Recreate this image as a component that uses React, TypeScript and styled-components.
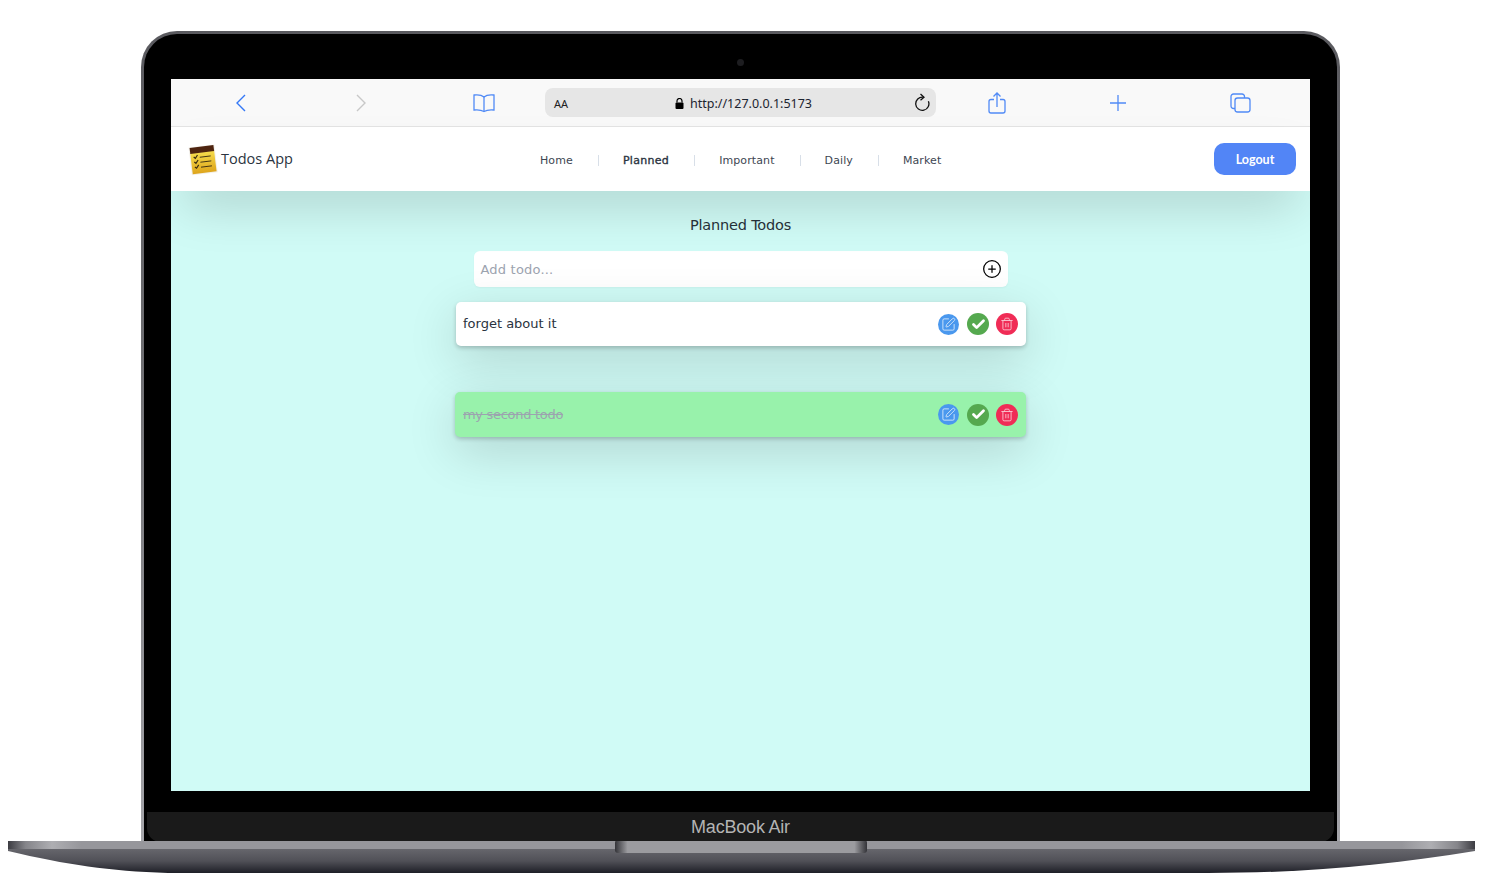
import React from 'react';
import styled, { createGlobalStyle } from 'styled-components';
import { Check, CirclePlus, SquarePen, Trash2 } from 'lucide-react';

const GlobalStyle = createGlobalStyle`
	html, body {
		margin: 0;
		background: #fff;
		overflow: hidden;
	}
`;

const Page = styled.div`
	width: 1494px;
	height: 894px;
	padding-top: 31px;
	box-sizing: border-box;
	display: flex;
	flex-direction: column;
	align-items: flex-start;
`;

const Lid = styled.div`
	width: 1199px;
	height: 810px;
	margin-left: 141px;
	padding: 3px 3px 0;
	box-sizing: border-box;
	border-radius: 36px 36px 0 0;
	background: linear-gradient(180deg, #5a5a5f 0%, #6e6e72 40%, #a5a5aa 100%);
`;

const Bezel = styled.div`
	height: 100%;
	border-radius: 33px 33px 0 0;
	background: #000;
	display: flex;
	flex-direction: column;
`;

const CameraRow = styled.div`
	height: 45px;
	flex: none;
	display: flex;
	align-items: flex-end;
	justify-content: center;
	padding-bottom: 13px;
	box-sizing: border-box;
`;

const Camera = styled.div`
	width: 7px;
	height: 7px;
	border-radius: 50%;
	background: #1d1d20;
`;

const Screen = styled.div`
	height: 712px;
	flex: none;
	margin: 0 27px;
	display: flex;
	flex-direction: column;
	overflow: hidden;
	background: #d0fbf6;
`;

const Chin = styled.div`
	flex: 1;
	margin: 21px 3px 0;
	border-radius: 0 0 14px 14px;
	background: #1a1a1a;
	color: #b4b4b4;
	font: 18px/30px 'Liberation Sans', Arial, sans-serif;
	text-align: center;
	letter-spacing: -0.2px;
`;

const BrowserBar = styled.div`
	height: 48px;
	flex: none;
	box-sizing: border-box;
	display: flex;
	align-items: center;
	background: #f9f9f9;
	border-bottom: 1px solid #e4e4e4;
`;

const BarSlot = styled.div<{ $w: number; $shift?: number }>`
	width: ${(p) => p.$w}px;
	padding-left: ${(p) => p.$shift || 0}px;
	box-sizing: border-box;
	flex: none;
	display: flex;
	justify-content: center;
	align-items: center;
`;

const AddressBar = styled.div`
	width: 391px;
	height: 29px;
	flex: none;
	box-sizing: border-box;
	padding: 0 6px 0 9px;
	border-radius: 8px;
	background: #e6e6e6;
	display: flex;
	align-items: center;
	font-family: 'Noto Sans', sans-serif;
	color: #222;
`;

const AaLabel = styled.span`
	font-size: 11px;
	width: 121px;
	padding-top: 1px;
`;

const Url = styled.span`
	flex: 1;
	display: flex;
	align-items: center;
	gap: 6px;
	padding-top: 1px;
	font-size: 12.5px;
	color: #1c2430;
`;

const NavBar = styled.nav`
	height: 64px;
	flex: none;
	position: relative;
	z-index: 1;
	box-sizing: border-box;
	padding: 0 14px 0 15px;
	display: flex;
	align-items: center;
	background: #fff;
	box-shadow: 0 25px 50px -12px rgba(0, 0, 0, 0.18);
`;

const Brand = styled.div`
	width: 354px;
	flex: none;
	display: flex;
	align-items: center;
	gap: 3px;
	font: 14.5px 'Open Sans', sans-serif;
	color: #2b3440;
`;

const BrandName = styled.span`
	padding-bottom: 2px;
`;

const NavLinks = styled.div`
	flex: 1;
	display: flex;
	align-items: center;
	padding-top: 2px;
	font: 11px 'DejaVu Sans', sans-serif;
	letter-spacing: 0.1px;
	color: #3d4652;
`;

const NavLink = styled.span<{ $active?: boolean }>`
	color: ${(p) => (p.$active ? '#2a3340' : '#3d4652')};
	letter-spacing: ${(p) => (p.$active ? '0.3px' : '0.1px')};
	-webkit-text-stroke: ${(p) => (p.$active ? '0.35px #2a3340' : '0')};
`;

const NavDivider = styled.span`
	width: 1px;
	height: 11px;
	margin: 0 24px 0 25px;
	background: #d8dfe8;
`;

const LogoutButton = styled.button`
	width: 82px;
	height: 32px;
	flex: none;
	border: 0;
	border-radius: 10px;
	background: #5285f6;
	color: #fff;
	font: 700 12.5px 'Lato', sans-serif;
`;

const Content = styled.main`
	flex: 1;
	display: flex;
	flex-direction: column;
	align-items: center;
	font-family: 'DejaVu Sans', sans-serif;
`;

const Title = styled.h1`
	margin: 24px 0 16px;
	font-size: 14.5px;
	letter-spacing: -0.2px;
	line-height: 20px;
	font-weight: 400;
	color: #27323a;
`;

const AddRow = styled.div`
	width: 534px;
	height: 36px;
	box-sizing: border-box;
	padding: 0 6px 0 7px;
	margin-bottom: 15px;
	border-radius: 6px;
	background: #fff;
	display: flex;
	align-items: center;
	justify-content: space-between;
	box-shadow: 0 1px 2px rgba(0, 0, 0, 0.04);
	font-size: 13px;
	letter-spacing: 0.2px;
	color: #9ca3af;
`;

const TodoList = styled.div`
	display: flex;
	flex-direction: column;
	gap: 46px;
`;

const TodoCard = styled.div<{ $done?: boolean }>`
	width: ${(p) => (p.$done ? 571 : 570)}px;
	height: ${(p) => (p.$done ? 45 : 44)}px;
	margin-left: ${(p) => (p.$done ? 0 : 1)}px;
	box-sizing: border-box;
	padding: 0 ${(p) => (p.$done ? 8 : 7)}px 0 ${(p) => (p.$done ? 8 : 7)}px;
	border-radius: 5px;
	background: ${(p) => (p.$done ? '#98f2ab' : '#fff')};
	display: flex;
	align-items: center;
	justify-content: space-between;
	box-shadow: 0 14px 50px rgba(0, 0, 0, 0.16), 0 2px 4px rgba(0, 0, 0, 0.2);
`;

const TodoText = styled.span<{ $done?: boolean }>`
	font-size: 13px;
	padding-bottom: ${(p) => (p.$done ? 0 : 1)}px;
	letter-spacing: ${(p) => (p.$done ? '-0.3px' : '0')};
	color: ${(p) => (p.$done ? '#9ca3af' : '#2a3340')};
	text-decoration: ${(p) => (p.$done ? 'line-through' : 'none')};
`;

const Actions = styled.div<{ $done?: boolean }>`
	display: flex;
	align-items: center;
	gap: 7px;
	margin-right: ${(p) => (p.$done ? 0 : 1)}px;
`;

const ActionButton = styled.span<{ $bg: string; $size: number; $gap?: number }>`
	width: ${(p) => p.$size}px;
	height: ${(p) => p.$size}px;
	margin-right: ${(p) => p.$gap || 0}px;
	border-radius: 50%;
	background: ${(p) => p.$bg};
	display: flex;
	align-items: center;
	justify-content: center;
	color: #fff;
`;

const BaseRow = styled.div`
	margin-left: 8px;
	line-height: 0;
`;

const blue = '#3478f6';

const BackIcon = () => (
	<svg width="12" height="18" viewBox="0 0 12 18" fill="none" stroke={blue} strokeWidth="1.4">
		<path d="M10 1 2 9l8 8" />
	</svg>
);

const ForwardIcon = () => (
	<svg width="12" height="18" viewBox="0 0 12 18" fill="none" stroke="#c8c8c8" strokeWidth="1.4">
		<path d="M2 1l8 8-8 8" />
	</svg>
);

const BookIcon = () => (
	<svg width="24" height="20" viewBox="0 0 24 20" fill="none" stroke={blue} strokeWidth="1.3" opacity="0.85">
		<path d="M12 4C10 2.2 6.5 1.5 2 2v15c4-.4 7.5 0 10 1.5 2.5-1.5 6-1.9 10-1.5V2c-4.5-.5-8 .2-10 2z" />
		<path d="M12 4v14.5" />
	</svg>
);

const LockIcon = () => (
	<svg width="9" height="11" viewBox="0 0 9 11" fill="#000">
		<path d="M2 4.5V3a2.5 2.5 0 0 1 5 0v1.5" fill="none" stroke="#000" strokeWidth="1.2" />
		<rect x="0.5" y="4.5" width="8" height="6.5" rx="1" />
	</svg>
);

const ReloadIcon = () => (
	<svg width="17" height="19" viewBox="0 0 17 19" fill="none" stroke="#111" strokeWidth="1.3">
		<path d="M10 4.2a6.6 6.6 0 1 0 5.4 4" />
		<path d="M7.5 1l3.5 3.2-3.5 3" />
	</svg>
);

const ShareIcon = () => (
	<svg width="18" height="22" viewBox="0 0 18 22" fill="none" stroke={blue} strokeWidth="1.3" opacity="0.85">
		<path d="M6 7.5H3a2 2 0 0 0-2 2V19a2 2 0 0 0 2 2h12a2 2 0 0 0 2-2V9.5a2 2 0 0 0-2-2h-3" />
		<path d="M9 15V1M5.5 4.5 9 1l3.5 3.5" />
	</svg>
);

const PlusIcon = () => (
	<svg width="18" height="18" viewBox="0 0 18 18" fill="none" stroke={blue} strokeWidth="1.3" opacity="0.85">
		<path d="M9 1v16M1 9h16" />
	</svg>
);

const TabsIcon = () => (
	<svg width="21" height="20" viewBox="0 0 21 20" fill="none" stroke={blue} strokeWidth="1.3" opacity="0.85">
		<path d="M5 15.5H3.5A2.5 2.5 0 0 1 1 13V3.5A2.5 2.5 0 0 1 3.5 1H12a2.5 2.5 0 0 1 2.5 2.5V5" />
		<rect x="5" y="5" width="15" height="14" rx="2.5" />
	</svg>
);

const NotepadLogo = () => (
	<svg width="32" height="33" viewBox="0 0 32 33">
		<defs>
			<linearGradient id="padFill" x1="0" y1="0" x2="0" y2="1">
				<stop offset="0" stopColor="#f6dc4c" />
				<stop offset="1" stopColor="#dea51c" />
			</linearGradient>
		</defs>
		<g transform="rotate(-7 16 16)">
			<rect x="4" y="3" width="26" height="28" fill="#f2f0ea" />
			<rect x="5" y="9" width="24" height="21" fill="url(#padFill)" />
			<rect x="5" y="3.5" width="24" height="6" fill="#4e2410" />
			<g fill="none" stroke="#3a2c10" strokeWidth="1.2">
				<path d="M8 13l1.5 1.5 2.5-3M8 18l1.5 1.5 2.5-3M8 23l1.5 1.5 2.5-3" />
				<path d="M14 14h11M14 19h11M14 24h11" strokeWidth="0.9" />
			</g>
		</g>
	</svg>
);

const LaptopBase = () => (
	<svg width="1467" height="34" viewBox="0 0 1467 34">
		<defs>
			<linearGradient id="bandFill" x1="0" y1="0" x2="1" y2="0">
				<stop offset="0" stopColor="#3c3c42" />
				<stop offset="0.012" stopColor="#85858a" />
				<stop offset="0.03" stopColor="#aeaeb2" />
				<stop offset="0.05" stopColor="#96969b" />
				<stop offset="0.95" stopColor="#96969b" />
				<stop offset="0.97" stopColor="#aeaeb2" />
				<stop offset="0.988" stopColor="#85858a" />
				<stop offset="1" stopColor="#3c3c42" />
			</linearGradient>
			<linearGradient id="bellyFill" x1="0" y1="0" x2="0" y2="1">
				<stop offset="0" stopColor="#66666c" />
				<stop offset="0.5" stopColor="#505057" />
				<stop offset="1" stopColor="#1e1f27" />
			</linearGradient>
			<linearGradient id="notchFill" x1="0" y1="0" x2="1" y2="0">
				<stop offset="0" stopColor="#333338" />
				<stop offset="0.05" stopColor="#9b9b9f" />
				<stop offset="0.95" stopColor="#9b9b9f" />
				<stop offset="1" stopColor="#333338" />
			</linearGradient>
		</defs>
		<path d="M0 8H1467V10C1380 24 1300 32 1200 32H160C100 30 60 24 0 10z" fill="url(#bellyFill)" />
		<rect x="0" y="0" width="1467" height="8" fill="url(#bandFill)" />
		<rect x="607" y="-1" width="252" height="13" rx="3" fill="url(#notchFill)" />
	</svg>
);

const navItems = ['Home', 'Planned', 'Important', 'Daily', 'Market'];

const todos = [
	{ id: 1, text: 'forget about it', done: false },
	{ id: 2, text: 'my second todo', done: true },
];

export default function App() {
	return (
		<Page>
			<GlobalStyle />
			<Lid>
				<Bezel>
					<CameraRow>
						<Camera />
					</CameraRow>
					<Screen>
						<BrowserBar>
							<BarSlot $w={140}><BackIcon /></BarSlot>
							<BarSlot $w={100}><ForwardIcon /></BarSlot>
							<BarSlot $w={134} $shift={12}><BookIcon /></BarSlot>
							<AddressBar>
								<AaLabel>AA</AaLabel>
								<Url><LockIcon />http://127.0.0.1:5173</Url>
								<ReloadIcon />
							</AddressBar>
							<BarSlot $w={122}><ShareIcon /></BarSlot>
							<BarSlot $w={120}><PlusIcon /></BarSlot>
							<BarSlot $w={124}><TabsIcon /></BarSlot>
						</BrowserBar>
						<NavBar>
							<Brand>
								<NotepadLogo />
								<BrandName>Todos App</BrandName>
							</Brand>
							<NavLinks>
								{navItems.map((item, i) => (
									<React.Fragment key={item}>
										{i > 0 && <NavDivider />}
										<NavLink $active={item === 'Planned'}>{item}</NavLink>
									</React.Fragment>
								))}
							</NavLinks>
							<LogoutButton>Logout</LogoutButton>
						</NavBar>
						<Content>
							<Title>Planned Todos</Title>
							<AddRow>
								Add todo...
								<CirclePlus size={20} color="#000" strokeWidth={1.5} />
							</AddRow>
							<TodoList>
								{todos.map((todo) => (
									<TodoCard key={todo.id} $done={todo.done}>
										<TodoText $done={todo.done}>{todo.text}</TodoText>
										<Actions $done={todo.done}>
											<ActionButton $bg="#4a98ee" $size={21} $gap={1}>
												<SquarePen size={15} strokeWidth={1.5} opacity={0.75} />
											</ActionButton>
											<ActionButton $bg="#55a94f" $size={22}>
												<Check size={15} strokeWidth={4.5} />
											</ActionButton>
											<ActionButton $bg="#f02c56" $size={22}>
												<Trash2 size={14} strokeWidth={1.5} opacity={0.75} />
											</ActionButton>
										</Actions>
									</TodoCard>
								))}
							</TodoList>
						</Content>
					</Screen>
					<Chin>MacBook Air</Chin>
				</Bezel>
			</Lid>
			<BaseRow>
				<LaptopBase />
			</BaseRow>
		</Page>
	);
}
